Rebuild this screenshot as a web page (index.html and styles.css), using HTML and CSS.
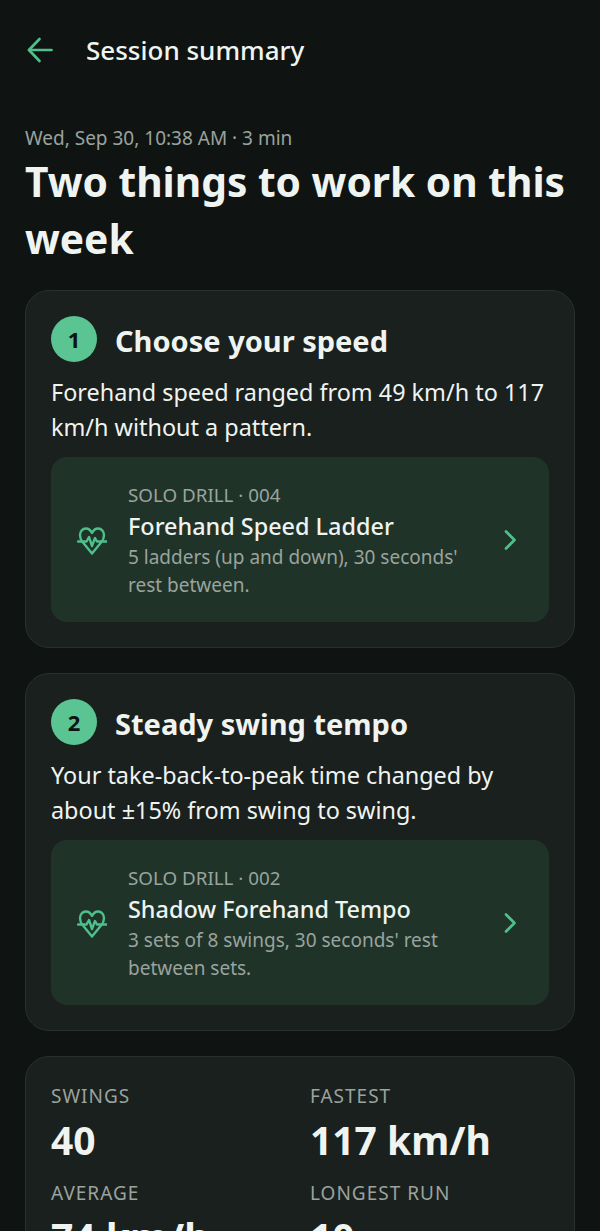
FILE: index.html
```html
<!DOCTYPE html>
<html lang="en">
<head>
    <meta charset="UTF-8">
    <meta name="viewport" content="width=device-width, initial-scale=1.0">
    <title>Session summary</title>
    <link rel="stylesheet" href="styles.css">
</head>
<body>
    <header class="topbar">
        <svg class="back-icon" viewBox="0 0 28 28" fill="none" stroke="currentColor" stroke-width="2.7" stroke-linecap="round" stroke-linejoin="round">
            <path d="M25.500 14H3"/>
            <path d="M13.500 3 3 14l10.500 11"/>
        </svg>
        <span class="topbar-title">Session summary</span>
    </header>
    <main class="content">
        <p class="meta">Wed, Sep 30, 10:38 AM · 3 min</p>
        <h1 class="headline">Two things to work on this week</h1>

        <section class="card">
            <div class="card-head">
                <span class="num">1</span>
                <h2 class="card-title">Choose your speed</h2>
            </div>
            <p class="card-text">Forehand speed ranged from 49 km/h to 117 km/h without a pattern.</p>
            <div class="drill">
                <svg class="heart-icon" viewBox="0 0 30 30" fill="none" stroke="currentColor" stroke-width="2.400" stroke-linecap="round" stroke-linejoin="round">
                    <path d="M15 8C13.600 5 11.300 3.500 8.800 3.500 5.400 3.500 3 6.500 3 10.200c0 2.800 1 5 2.800 7L15 28.500l9.200-11.300c1.800-2 2.800-4.200 2.800-7 0-3.700-2.400-6.700-5.800-6.700-2.500 0-4.800 1.500-6.200 4.500z"/>
                    <path d="M1 16.500h8.500l2.500-4.500 3 9 3-8 2 3.500h9.500"/>
                </svg>
                <div class="drill-body">
                    <div class="drill-tag">SOLO DRILL · 004</div>
                    <div class="drill-name">Forehand Speed Ladder</div>
                    <div class="drill-desc">5 ladders (up and down), 30 seconds' rest between.</div>
                </div>
                <svg class="chevron" viewBox="0 0 14 22" fill="none" stroke="currentColor" stroke-width="2.700" stroke-linecap="round" stroke-linejoin="round">
                    <path d="M3 2.500 11.500 11 3 19.500"/>
                </svg>
            </div>
        </section>

        <section class="card">
            <div class="card-head">
                <span class="num">2</span>
                <h2 class="card-title">Steady swing tempo</h2>
            </div>
            <p class="card-text">Your take-back-to-peak time changed by about ±15% from swing to swing.</p>
            <div class="drill">
                <svg class="heart-icon" viewBox="0 0 30 30" fill="none" stroke="currentColor" stroke-width="2.400" stroke-linecap="round" stroke-linejoin="round">
                    <path d="M15 8C13.600 5 11.300 3.500 8.800 3.500 5.400 3.500 3 6.500 3 10.200c0 2.800 1 5 2.800 7L15 28.500l9.200-11.300c1.800-2 2.800-4.200 2.800-7 0-3.700-2.400-6.700-5.800-6.700-2.500 0-4.800 1.500-6.200 4.500z"/>
                    <path d="M1 16.500h8.500l2.500-4.500 3 9 3-8 2 3.500h9.500"/>
                </svg>
                <div class="drill-body">
                    <div class="drill-tag">SOLO DRILL · 002</div>
                    <div class="drill-name">Shadow Forehand Tempo</div>
                    <div class="drill-desc">3 sets of 8 swings, 30 seconds' rest between sets.</div>
                </div>
                <svg class="chevron" viewBox="0 0 14 22" fill="none" stroke="currentColor" stroke-width="2.700" stroke-linecap="round" stroke-linejoin="round">
                    <path d="M3 2.500 11.500 11 3 19.500"/>
                </svg>
            </div>
        </section>

        <section class="card stats">
            <div class="stat">
                <div class="stat-label">SWINGS</div>
                <div class="stat-value">40</div>
            </div>
            <div class="stat">
                <div class="stat-label">FASTEST</div>
                <div class="stat-value">117 km/h</div>
            </div>
            <div class="stat">
                <div class="stat-label">AVERAGE</div>
                <div class="stat-value">74 km/h</div>
            </div>
            <div class="stat">
                <div class="stat-label">LONGEST RUN</div>
                <div class="stat-value">10</div>
            </div>
        </section>
    </main>
</body>
</html>
```

FILE: styles.css
```css
html, body {
    height: 1231px;
    overflow: hidden;
}

body {
    margin: 0;
    padding: 0;
    background-color: #0f1412;
    color: #f0f4f1;
    font-family: "Noto Sans", "Open Sans", sans-serif;
}

.topbar {
    display: flex;
    align-items: center;
    height: 100px;
    padding-left: 26px;
}

.back-icon {
    width: 28px;
    height: 28px;
    color: #4fbf8b;
}

.topbar-title {
    margin-left: 32px;
    font-size: 26px;
    font-weight: 500;
}

.content {
    padding: 0 25px;
}

.meta {
    margin: 24px 0 0;
    font-size: 19px;
    line-height: 28px;
    color: #9aa39e;
}

.headline {
    margin: 1px 0 23px;
    font-size: 40.700px;
    line-height: 57px;
    font-weight: 700;
}

.card {
    margin-bottom: 25px;
    padding: 25px;
    background-color: #1a201d;
    border: 1px solid #2a312d;
    border-radius: 24px;
}

.card-head {
    display: flex;
    align-items: center;
    gap: 18px;
}

.num {
    display: flex;
    align-items: center;
    justify-content: center;
    width: 46px;
    height: 46px;
    border-radius: 50%;
    background-color: #5ac592;
    color: #0e1311;
    font-size: 22px;
    font-weight: 700;
}

.card-title {
    margin: 0;
    padding-top: 2px;
    font-size: 29px;
    font-weight: 700;
}

.card-text {
    margin: 13px 0 12px;
    font-size: 23.400px;
    line-height: 35px;
}

.drill {
    display: flex;
    align-items: center;
    height: 165px;
    padding: 0 32px 0 26px;
    box-sizing: border-box;
    background-color: #1f3329;
    border-radius: 16px;
}

.heart-icon {
    flex: none;
    width: 30px;
    height: 30px;
    color: #4fbf8b;
}

.drill-body {
    flex: 1;
    margin-left: 21px;
}

.drill-tag {
    padding-top: 1px;
    font-size: 18.800px;
    line-height: 27px;
    color: #9aa39e;
}

.drill-name {
    font-size: 23.400px;
    line-height: 34px;
    font-weight: 500;
}

.drill-desc {
    max-width: 350px;
    font-size: 19px;
    line-height: 28px;
    color: #9aa39e;
}

.chevron {
    flex: none;
    width: 14px;
    height: 22px;
    color: #4fbf8b;
}

.stats {
    display: grid;
    grid-template-columns: 1fr 1fr;
    gap: 12px 20px;
}

.stat-label {
    font-size: 19px;
    line-height: 28px;
    letter-spacing: 1px;
    color: #9aa39e;
}

.stat-value {
    margin-top: 3px;
    font-size: 39px;
    line-height: 54px;
    font-weight: 700;
}
```
